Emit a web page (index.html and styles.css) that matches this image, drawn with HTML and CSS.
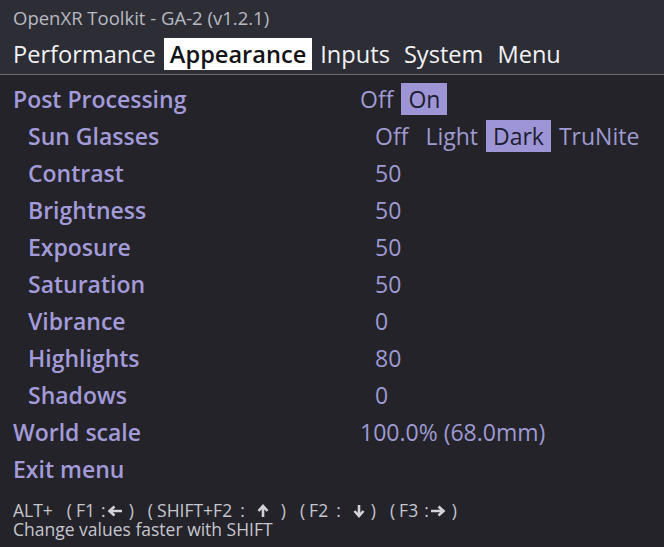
FILE: index.html
```html
<!DOCTYPE html>
<html>
<head>
<meta charset="utf-8">
<link rel="stylesheet" href="styles.css">
</head>
<body>
<div class="header">
  <div class="title">OpenXR Toolkit - GA-2 (v1.2.1)</div>
  <div class="tabs">
    <span class="tab">Performance</span>
    <span class="tab active">Appearance</span>
    <span class="tab">Inputs</span>
    <span class="tab">System</span>
    <span class="tab">Menu</span>
  </div>
</div>
<div class="menu">
  <div class="row"><span class="label">Post Processing</span><span class="values"><span class="opt">Off</span><span class="opt sel">On</span></span></div>
  <div class="row sub"><span class="label">Sun Glasses</span><span class="values"><span class="opt wide">Off</span><span class="opt">Light</span><span class="opt sel">Dark</span><span class="opt">TruNite</span></span></div>
  <div class="row sub"><span class="label">Contrast</span><span class="values">50</span></div>
  <div class="row sub"><span class="label">Brightness</span><span class="values">50</span></div>
  <div class="row sub"><span class="label">Exposure</span><span class="values">50</span></div>
  <div class="row sub"><span class="label">Saturation</span><span class="values">50</span></div>
  <div class="row sub"><span class="label">Vibrance</span><span class="values">0</span></div>
  <div class="row sub"><span class="label">Highlights</span><span class="values">80</span></div>
  <div class="row sub"><span class="label">Shadows</span><span class="values">0</span></div>
  <div class="row"><span class="label">World scale</span><span class="values">100.0% (68.0mm)</span></div>
  <div class="row"><span class="label">Exit menu</span></div>
</div>
<div class="footer">
  <div class="keys"><span>ALT+</span><span class="ob">(</span><span>F1</span><span class="ct">:</span><svg class="arr h" viewBox="0 0 16 12"><path d="M15 6H3M7.5 1.5L2.5 6l5 4.5"/></svg><span class="cb">)</span><span class="ob">(</span><span>SHIFT+F2</span><span class="cs">:</span><svg class="arr v" viewBox="0 0 12 14"><path d="M6 13V2.5M1.5 7L6 2l4.5 5"/></svg><span class="cb wide">)</span><span class="ob">(</span><span>F2</span><span class="cs">:</span><svg class="arr v" viewBox="0 0 12 14"><path d="M6 1v10.5M1.5 7L6 12l4.5-5"/></svg><span class="cb">)</span><span class="ob">(</span><span>F3</span><span class="ct">:</span><svg class="arr h" viewBox="0 0 16 12"><path d="M1 6h12M8.5 1.5l5 4.5-5 4.5"/></svg><span class="cb">)</span></div>
  <div>Change values faster with SHIFT</div>
</div>
</body>
</html>
```
FILE: styles.css
```css
html, body {
  margin: 0;
  padding: 0;
  background: #232329;
  font-family: "Open Sans", "Noto Sans", sans-serif;
  width: 664px;
  height: 547px;
  overflow: hidden;
}
.header {
  background: #2d2e35;
  height: 75px;
  border-bottom: 1px solid #6b6c73;
  box-sizing: border-box;
  padding-top: 7px;
}
.title {
  color: #b9b9c2;
  font-size: 18.5px;
  line-height: 22px;
  padding-left: 13px;
}
.tabs {
  display: flex;
  gap: 2px;
  padding-left: 7px;
  margin-top: 9px;
}
.tab {
  color: #f2f2f5;
  font-size: 23.6px;
  line-height: 32px;
  padding: 0 6px;
}
.tab.active {
  background: #ffffff;
  color: #141418;
  font-weight: 600;
}
.menu {
  padding-top: 5px;
}
.row {
  display: grid;
  grid-template-columns: 347px auto;
  height: 37px;
  align-items: center;
  padding-left: 13px;
  color: #a39bd9;
  font-size: 23px;
}
.row.sub {
  padding-left: 28px;
}
.label {
  font-weight: 600;
}
.values {
  display: flex;
  gap: 8px;
  color: #9f9ad2;
}
.opt.wide {
  margin-right: 9px;
}
.opt.sel {
  background: #9d95d6;
  color: #1d1d30;
  padding: 0 7px;
}
.footer {
  padding-left: 13px;
  padding-top: 14px;
  color: #c6c6cf;
  font-size: 17.5px;
  line-height: 19px;
}
.keys {
  display: flex;
  align-items: center;
}
.ob {
  margin-left: 14px;
  margin-right: 4px;
}
.cb {
  margin-left: 6px;
}
.cb.wide {
  margin-left: 12px;
}
.ct {
  margin-left: 6px;
  margin-right: 1px;
}
.cs {
  margin-left: 8px;
  margin-right: 12px;
}
.arr {
  fill: none;
  stroke: #d2d2da;
  stroke-width: 2.6;
  stroke-linecap: butt;
  stroke-linejoin: miter;
}
.arr.h {
  width: 16px;
  height: 12px;
}
.arr.v {
  width: 12px;
  height: 14px;
}
```
